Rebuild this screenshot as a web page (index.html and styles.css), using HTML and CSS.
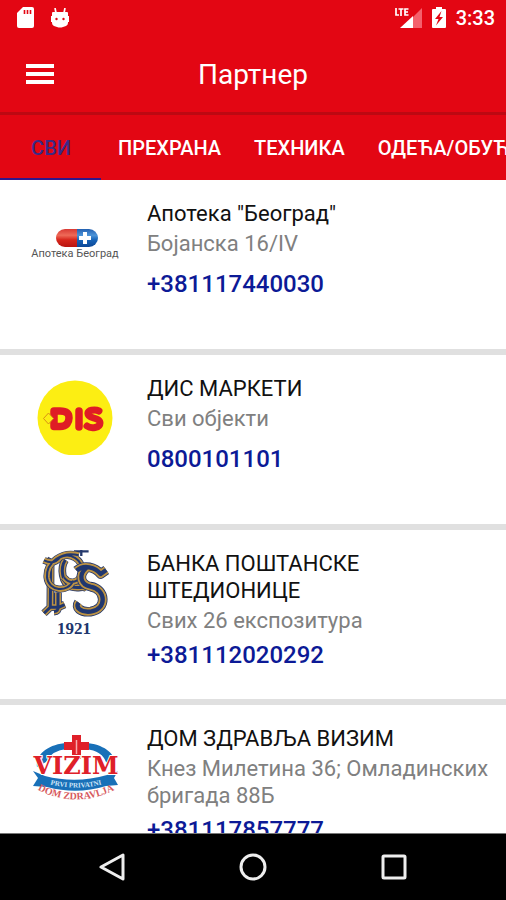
FILE: index.html
```html
<!DOCTYPE html>
<html lang="sr">
<head>
<meta charset="utf-8">
<meta name="viewport" content="width=device-width, initial-scale=1">
<title>Партнер</title>
<link rel="stylesheet" href="styles.css">
</head>
<body>
<div class="status">
  <svg width="18" height="22" viewBox="0 0 18 22" aria-hidden="true"><path fill="#fff" d="M6 0h9q2 0 2 2v17q0 2-2 2H2q-2 0-2-2V6z"/><path stroke="#e30613" stroke-width="1.6" d="M7.500 3v4M10.500 3v4M13.500 3v4"/></svg>
  <svg class="debug" width="18" height="21" viewBox="0 0 18 21" aria-hidden="true"><path fill="none" stroke="#fff" stroke-width="1.700" d="M4 0l1 5M14 0l-1 5"/><path fill="#fff" d="M1 5q0-1 1-1h14q1 0 1 1v10q0 2-2 3l-3 1q-3 1-6 0l-3-1q-2-1-2-3zM0 8h2v6H0zM16 8h2v6h-2z"/><circle cx="5.500" cy="11" r="1.200" fill="#e30613"/><circle cx="12.500" cy="11" r="1.200" fill="#e30613"/></svg>
  <svg class="signal" width="27" height="22" viewBox="0 0 27 22" aria-hidden="true"><path fill="#f4606c" d="M27 1v20h-9V10z"/><path fill="#fff" d="M5 21L18 9v12z"/><path fill="none" stroke="#fff" stroke-width="1.700" d="M1 1v7h3M3.500 2h5M6 2v7M13.500 2H10v6h3.500M10 5h3"/></svg>
  <svg class="battery" width="14" height="22" viewBox="0 0 14 22" aria-hidden="true"><path fill="#fff" d="M4 0h6v2h3q1 0 1 1v17q0 1-1 1H1q-1 0-1-1V3q0-1 1-1h3z"/><path fill="#e30613" d="M9.500 4L3 12h3.500L4 18.500 11 10H7.500z"/></svg>
  <span class="clock">3:33</span>
</div>
<header class="bar">
  <button class="menu" type="button" aria-label="Мени"><svg width="28" height="20" viewBox="0 0 28 20" aria-hidden="true"><path fill="#fff" d="M0 0h28v4H0zM0 8h28v4H0zM0 16h28v4H0z"/></svg></button>
  <h1>Партнер</h1>
</header>
<nav class="tabs">
  <a class="tab active" href="#svi">СВИ</a>
  <a class="tab" href="#prehrana">ПРЕХРАНА</a>
  <a class="tab" href="#tehnika">ТЕХНИКА</a>
  <a class="tab" href="#odeca">ОДЕЋА/ОБУЋА</a>
</nav>
<main class="list">
  <article class="partner">
    <svg class="logo" width="90" height="80" viewBox="0 0 90 80" role="img" aria-label="Апотека Београд">
      <defs>
        <linearGradient id="red" x2="0" y2="1"><stop stop-color="#d83a34"/><stop offset=".35" stop-color="#ee6a58"/><stop offset=".6" stop-color="#d7261c"/><stop offset="1" stop-color="#b91410"/></linearGradient>
        <linearGradient id="blue" x2="0" y2="1"><stop stop-color="#2360b0"/><stop offset=".35" stop-color="#4d94d8"/><stop offset=".6" stop-color="#1764b8"/><stop offset="1" stop-color="#0c4796"/></linearGradient>
      </defs>
      <path fill="url(#red)" d="M47 29H35a9 9 0 0 0 0 18h12z"/><path fill="url(#blue)" d="M47 29h12a9 9 0 0 1 0 18H47z"/>
      <path stroke="#fff" stroke-width="4" d="M55 32v12M49 38h12"/>
      <text class="pharmacy" x="45" y="57">Апотека Београд</text>
    </svg>
    <div class="info">
      <div class="about"><h2>Апотека "Београд"</h2><p>Бојанска 16/IV</p></div>
      <a class="phone" href="tel:+381117440030">+381117440030</a>
    </div>
  </article>
  <article class="partner">
    <svg class="logo" width="90" height="80" viewBox="0 0 90 80" role="img" aria-label="DIS">
      <circle cx="45" cy="43" r="37.500" fill="#fcee13"/>
      <g fill="none" stroke="#df1c25" stroke-linejoin="round"><path stroke-width="7.500" d="M24 36h6c7 0 9 3 9 7s-2 8.500-9 8.500h-6z"/><path stroke-width="7.500" stroke-linecap="round" d="M49 36v16"/><path stroke-width="7" stroke-linecap="round" d="M69 36c-4-2-12-1-11 3 0 5 12 3 12 9 0 5-9 6-13 3"/></g>
      <path fill="#fcee13" stroke="#d99016" d="M18.500 38l5 5.500-5 5.500-5-5.500z"/>
    </svg>
    <div class="info">
      <div class="about"><h2>ДИС МАРКЕТИ</h2><p>Сви објекти</p></div>
      <a class="phone" href="tel:0800101101">0800101101</a>
    </div>
  </article>
  <article class="partner">
    <svg class="logo tall" width="90" height="90" viewBox="0 0 90 90" role="img" aria-label="Банка Поштанске штедионице 1921">
      <defs>
        <path id="stem" d="M25 42L38 50 37 184 18 202M60 140V184Q62 196 48 197M37 184H62L80 176"/>
        <path id="bowl" d="M18 43Q48 58 66 34C96 18 134 40 132 76 128 110 96 118 78 94M122 28C74 14 24 48 27 94 31 136 90 142 106 104"/>
        <path id="es" d="M205 72L188 84C172 64 138 54 116 74M145 66C120 88 128 116 158 122 205 130 208 190 158 197 126 200 112 184 122 170"/>
        <path id="inner" d="M82 42C66 66 72 112 98 122 122 130 136 118 148 128"/>
      </defs>
      <g transform="translate(8 -4) scale(.333)" fill="none" stroke-linejoin="round">
        <path stroke="#24386c" stroke-width="7" d="M108 16H152M130 12V30"/>
        <g stroke="#24386c" stroke-width="23"><use href="#stem"/><use href="#inner"/></g>
        <g stroke="#bd9344" stroke-width="18"><use href="#stem"/><use href="#inner"/></g>
        <g stroke="#20376f" stroke-width="9"><use href="#stem"/><use href="#inner"/></g>
        <use href="#bowl" stroke="#24386c" stroke-width="21"/>
        <use href="#bowl" stroke="#bd9344" stroke-width="17"/>
        <use href="#bowl" stroke="#20376f" stroke-width="6"/>
        <use href="#es" stroke="#24386c" stroke-width="29"/>
        <use href="#es" stroke="#bd9344" stroke-width="24"/>
        <use href="#es" stroke="#20376f" stroke-width="13"/>
      </g>
      <text class="year" x="44" y="84">1921</text>
    </svg>
    <div class="info">
      <div class="about"><h2>БАНКА ПОШТАНСКЕ ШТЕДИОНИЦЕ</h2><p>Свих 26 експозитура</p></div>
      <a class="phone" href="tel:+381112020292">+381112020292</a>
    </div>
  </article>
  <article class="partner">
    <svg class="logo tall" width="90" height="90" viewBox="0 0 90 90" role="img" aria-label="VIZIM Prvi privatni dom zdravlja">
      <defs><path id="ribbon" d="M12 57q34 11 68 0"/><path id="base" d="M6 64q40 21 80 0"/></defs>
      <path fill="#1870b8" d="M7 42C5 30 18 19 37 18v6Q22 25 16 37zM56 18C74 19 88 30 85 42l-9-5Q72 26 56 24z"/>
      <path fill="#df2029" d="M42 10h9v7h8v8h-8v9h-9v-9h-8v-8h8z"/>
      <path stroke="#f6a9ad" stroke-width="1.500" d="M46.500 15v14"/>
      <path fill="#1870b8" d="M3 46l12 5q31 8 62-1l11-4-4 7 4 7-12 1q-29 9-59 1L3 61l5-8z"/>
      <text class="vizim" x="46" y="49">VIZIM</text>
      <text class="ribbon"><textPath href="#ribbon" startOffset="50%">PRVI PRIVATNI</textPath></text>
      <text class="dom"><textPath href="#base" startOffset="50%">DOM ZDRAVLJA</textPath></text>
    </svg>
    <div class="info">
      <div class="about"><h2>ДОМ ЗДРАВЉА ВИЗИМ</h2><p>Кнез Милетина 36; Омладинских бригада 88Б</p></div>
      <a class="phone" href="tel:+381117857777">+381117857777</a>
    </div>
  </article>
</main>
<footer class="system">
  <button type="button" aria-label="Назад"><svg width="28" height="28" viewBox="0 0 28 28" aria-hidden="true"><path d="M25 2v24L3 14z"/></svg></button>
  <button type="button" aria-label="Почетна"><svg width="28" height="28" viewBox="0 0 28 28" aria-hidden="true"><circle cx="14" cy="14" r="12"/></svg></button>
  <button type="button" aria-label="Недавно"><svg width="28" height="28" viewBox="0 0 28 28" aria-hidden="true"><rect x="3" y="3" width="22" height="22" rx="1"/></svg></button>
</footer>
</body>
</html>
```
FILE: styles.css
```css
* { box-sizing: border-box; }
body {
  margin: 0;
  height: 100vh;
  display: flex;
  flex-direction: column;
  overflow: hidden;
  background: #fff;
  font-family: Roboto, "Noto Sans", sans-serif;
}
h1, h2, p { margin: 0; font-weight: 400; }
button { border: 0; padding: 0; background: none; display: flex; }
a { text-decoration: none; }

.status {
  flex: none;
  height: 36px;
  padding: 0 11px 0 17px;
  display: flex;
  align-items: center;
  background: #e30613;
}
.debug { margin-left: 16px; }
.signal { margin-left: auto; }
.battery { margin-left: 10px; }
.clock { margin-left: 10px; color: #fff; font-size: 20px; font-weight: 500; }

.bar {
  flex: none;
  height: 79px;
  padding: 0 26px;
  display: grid;
  grid-template-columns: 28px 1fr 28px;
  align-items: center;
  background: #e30613;
  border-bottom: 3px solid #bd0812;
}
.bar h1 { padding-top: 2px; color: #fff; font-size: 28px; line-height: 34px; text-align: center; }

.tabs {
  flex: none;
  height: 65px;
  display: flex;
  overflow: hidden;
  background: #e30613;
}
.tab {
  flex: none;
  min-width: 101px;
  padding: 2px 16px 0 17px;
  display: flex;
  align-items: center;
  justify-content: center;
  border-bottom: 2px solid transparent;
  color: #fff;
  font-size: 20px;
  font-weight: 500;
}
.tab.active { color: #3b2a86; border-color: #30168c; }

.list { flex: 1; min-height: 0; overflow: hidden; }
.partner {
  min-height: 175px;
  padding: 20px 8px 8px 30px;
  display: flex;
  align-items: flex-start;
  gap: 27px;
  border-bottom: 6px solid #e0e0e0;
}
.logo { flex: none; }
.info { flex: 1; min-width: 0; }
.about { min-height: 63px; margin-bottom: 8px; }
.about h2 { color: #111; font-size: 22px; line-height: 27px; }
.about p { margin-top: 3px; color: #808080; font-size: 22px; line-height: 27px; }
.phone { display: block; color: #0c1a96; font-size: 24px; line-height: 27px; font-weight: 500; }

.logo text { text-anchor: middle; }
.pharmacy { fill: #555; font-size: 11px; }
.year { fill: #20366d; font-family: "Liberation Serif", serif; font-size: 17px; font-weight: 700; }
.vizim { fill: #df2029; stroke: #fff; stroke-width: 2px; paint-order: stroke; font-family: "DejaVu Serif", serif; font-size: 24px; font-weight: 700; }
.ribbon { fill: #cfe5f7; font-family: "Liberation Serif", serif; font-size: 7px; font-weight: 700; }
.dom { fill: #d75a60; font-family: "Liberation Serif", serif; font-size: 10px; font-weight: 700; }

.system {
  flex: none;
  height: 67px;
  padding: 0 42px;
  display: flex;
  align-items: center;
  justify-content: space-around;
  background: #000;
  border-top: 1px solid #777;
}
.system svg { fill: none; stroke: #eee; stroke-width: 3px; stroke-linejoin: round; }
```
